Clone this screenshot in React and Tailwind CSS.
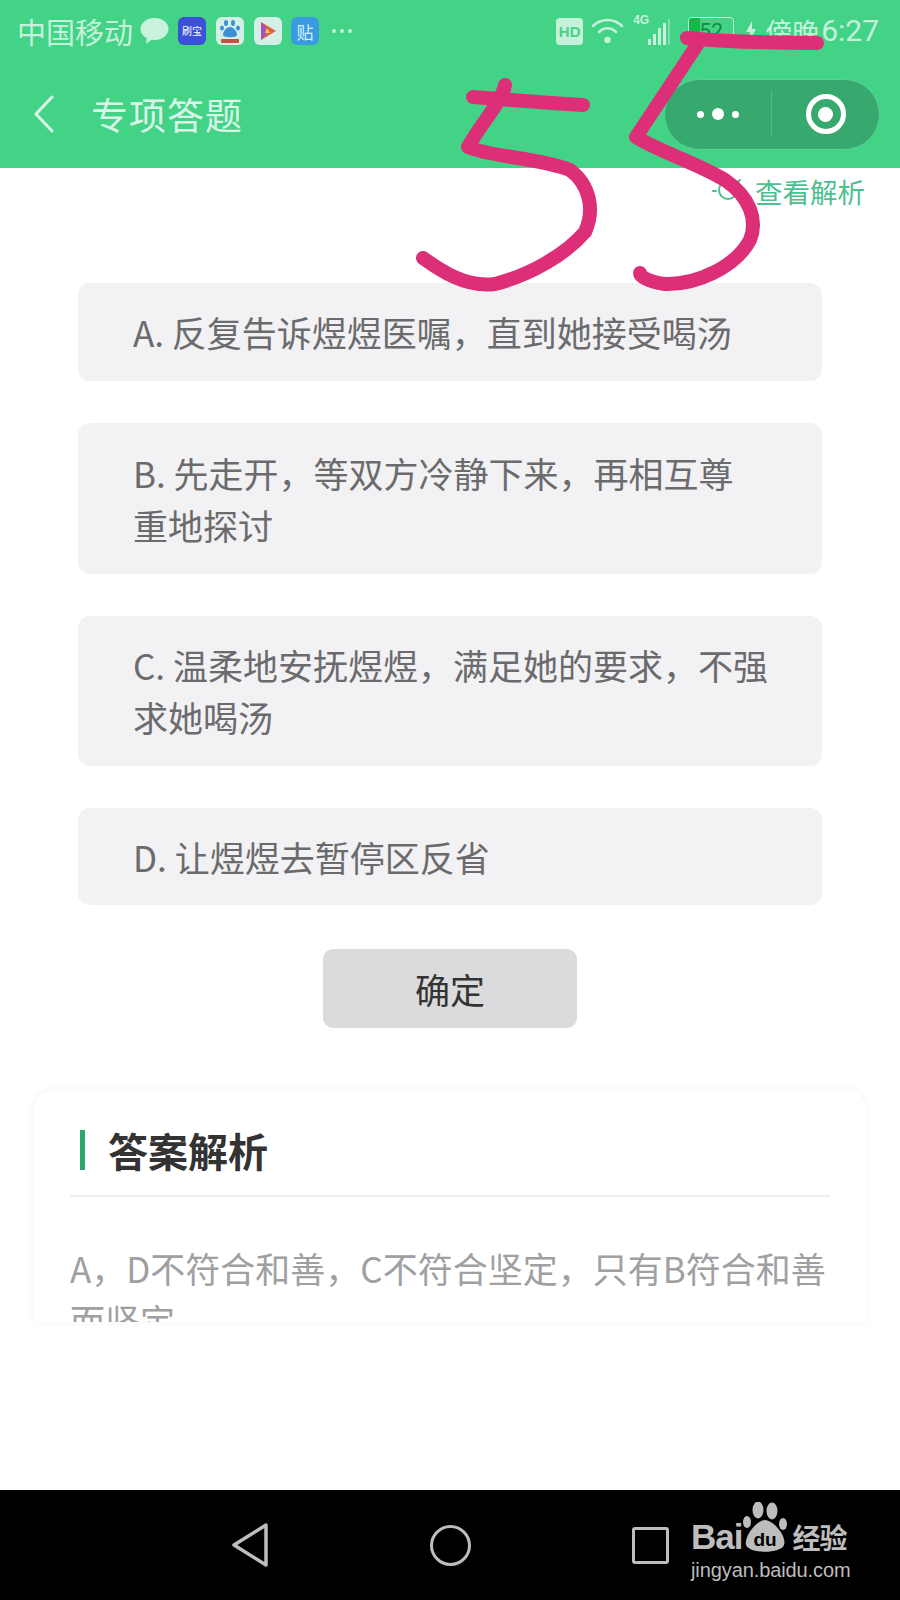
const FONT = "font-['Noto_Sans_CJK_SC','Noto_Sans',sans-serif]";

const options = [
  { text: 'A. 反复告诉煜煜医嘱，直到她接受喝汤', h: 'h-[98px]' },
  { text: 'B. 先走开，等双方冷静下来，再相互尊\n重地探讨', h: 'h-[151px]' },
  { text: 'C. 温柔地安抚煜煜，满足她的要求，不强\n求她喝汤', h: 'h-[150px]' },
  { text: 'D. 让煜煜去暂停区反省', h: 'h-[97px]' },
];

function StatusLeft() {
  return (
    <div className="flex items-center">
      <span className="text-[29px] leading-none text-[#c6f0da]">中国移动</span>
      <svg className="ml-[7px]" width="29" height="28" viewBox="0 0 29 28">
        <ellipse cx="14.5" cy="12" rx="14" ry="11" fill="#c9f2dd" />
        <path d="M7 19 L6 27 L14 21 Z" fill="#c9f2dd" />
      </svg>
      <div className="ml-[9px] flex h-[28px] w-[28px] items-center justify-center rounded-[6px] bg-[#3c50d8] text-[10px] leading-none text-white">刷宝</div>
      <div className="ml-[10px] flex h-[28px] w-[28px] flex-col items-center justify-center overflow-hidden rounded-[6px] bg-[#d3efe6]">
        <svg width="24" height="26" viewBox="0 0 24 26">
          <ellipse cx="8" cy="5" rx="2" ry="3" fill="#3e8fd6" />
          <ellipse cx="15" cy="5" rx="2" ry="3" fill="#3e8fd6" />
          <ellipse cx="4" cy="10" rx="2" ry="2.6" fill="#3e8fd6" />
          <ellipse cx="20" cy="10" rx="2" ry="2.6" fill="#3e8fd6" />
          <path d="M12 9 C8 9 5 14 5 17 C5 20 19 20 19 17 C19 14 16 9 12 9Z" fill="#3e8fd6" />
          <rect x="3" y="21" width="18" height="4" rx="1" fill="#b9573f" />
        </svg>
      </div>
      <div className="ml-[10px] flex h-[28px] w-[28px] items-center justify-center rounded-[6px] bg-[#d3efe6]">
        <svg width="20" height="20" viewBox="0 0 20 20">
          <path d="M3 1 L18 10 L3 19 Z" fill="#e2603d" />
          <path d="M3 1 L11 10 L3 19 Z" fill="#a64fbf" />
          <path d="M7 12 L12 12 L9 7 Z" fill="#f5d04a" />
        </svg>
      </div>
      <div className="ml-[9px] flex h-[28px] w-[28px] items-center justify-center rounded-[6px] bg-[#3a9be0] text-[17px] leading-none text-[#d9f0ff]">贴</div>
      <div className="ml-[13px] flex gap-[4px]">
        <span className="h-[4px] w-[4px] rounded-full bg-[#c6f0da]" />
        <span className="h-[4px] w-[4px] rounded-full bg-[#c6f0da]" />
        <span className="h-[4px] w-[4px] rounded-full bg-[#c6f0da]" />
      </div>
    </div>
  );
}

function StatusRight() {
  return (
    <div className="flex items-center">
      <div className="flex h-[27px] w-[27px] items-center justify-center rounded-[4px] bg-[#c6f0da] font-['Liberation_Sans',sans-serif] text-[15px] font-bold leading-none text-[#43d387]">HD</div>
      <svg className="ml-[8px]" width="33" height="28" viewBox="0 0 33 28" fill="none" stroke="#c6f0da" strokeWidth="2.5" strokeLinecap="round">
        <path d="M2 9 C10 1 23 1 31 9" />
        <path d="M8 15 C13 10 20 10 25 15" />
        <circle cx="16.5" cy="23" r="3.2" fill="#c6f0da" stroke="none" />
      </svg>
      <div className="relative ml-[9px] h-[28px] w-[40px]">
        <span className="absolute left-0 top-[-3px] font-['Liberation_Sans',sans-serif] text-[12px] font-bold leading-none text-[#c6f0da]">4G</span>
        <div className="absolute bottom-0 left-[15px] flex items-end gap-[2px]">
          <span className="h-[6px] w-[3px] bg-[#c6f0da]" />
          <span className="h-[11px] w-[3px] bg-[#c6f0da]" />
          <span className="h-[17px] w-[3px] bg-[#c6f0da]" />
          <span className="h-[22px] w-[3px] bg-[#c6f0da]" />
          <span className="h-[26px] w-[2px] bg-[#7fdcae]" />
        </div>
      </div>
      <div className="ml-[15px] flex h-[28px] w-[46px] items-center overflow-hidden rounded-[4px] border border-[#c6f0da]">
        <div className="relative h-full w-full">
          <div className="absolute inset-y-0 left-0 w-[11px] bg-[#12b84a]" />
          <span className="absolute inset-0 flex items-center justify-center font-['Roboto',sans-serif] text-[21px] leading-none text-[#0f8c43]">52</span>
        </div>
      </div>
      <svg className="ml-[12px]" width="10" height="20" viewBox="0 0 10 20">
        <path d="M6 0 L0 11 L4 11 L3 20 L10 8 L6 8 Z" fill="#c6f0da" />
      </svg>
      <span className="ml-[9px] text-[27px] leading-none text-[#c6f0da]">傍晚</span>
      <span className="ml-[2px] font-['Roboto',sans-serif] text-[30px] leading-none text-[#c6f0da]">6:27</span>
    </div>
  );
}

function Capsule() {
  return (
    <div className="flex h-[71px] w-[216px] items-center rounded-full border border-[#5ccf95] bg-[#37a96f]">
      <div className="flex flex-1 items-center justify-center gap-[8px]">
        <span className="h-[7px] w-[7px] rounded-full bg-white" />
        <span className="h-[12px] w-[12px] rounded-full bg-white" />
        <span className="h-[7px] w-[7px] rounded-full bg-white" />
      </div>
      <div className="h-[46px] w-px bg-[#5ab888]" />
      <div className="flex w-[107px] items-center justify-center">
        <div className="flex h-[40px] w-[40px] items-center justify-center rounded-full border-[5px] border-white">
          <span className="h-[15px] w-[15px] rounded-full bg-white" />
        </div>
      </div>
    </div>
  );
}

function Scribble() {
  return (
    <svg className="pointer-events-none absolute left-0 top-0" width="900" height="300" viewBox="0 0 900 300" fill="none" stroke="#dd2f78" strokeWidth="14" strokeLinecap="round" strokeLinejoin="round">
      <path d="M687 38 C730 42 780 43 817 43" />
      <path d="M697 45 L636 137 C660 152 695 162 725 180 C750 197 758 220 750 240 C735 268 695 285 665 284 C650 282 640 277 640 273" />
      <path d="M473 97 C510 100 550 103 583 105" />
      <path d="M505 85 C503 100 480 125 468 147 C490 157 540 158 570 170 C590 185 595 210 585 232 C565 255 530 275 495 284 C465 288 440 270 423 258" />
    </svg>
  );
}

function BaiduMark() {
  return (
    <div className="pointer-events-none absolute bottom-[19px] right-[48px] flex w-[161px] flex-col text-[#bdbdbd]">
      <div className="flex items-end">
        <span className="font-['Liberation_Sans',sans-serif] text-[35px] font-bold leading-[30px] tracking-[-1px]">Bai</span>
        <svg width="50" height="50" viewBox="0 0 50 50" className="ml-[-1px]">
          <ellipse cx="17" cy="8" rx="5.5" ry="8.5" fill="#bdbdbd" />
          <ellipse cx="31" cy="9" rx="5.5" ry="8.5" fill="#bdbdbd" />
          <ellipse cx="6" cy="20" rx="4" ry="6" fill="#bdbdbd" />
          <ellipse cx="42" cy="22" rx="4" ry="6" fill="#bdbdbd" />
          <path d="M24 18 C16 18 3 34 5 43 C8 52 40 52 43 43 C46 34 32 18 24 18Z" fill="#bdbdbd" />
          <text x="24" y="44" textAnchor="middle" fontSize="19" fontWeight="700" fontFamily="Liberation Sans" fill="#000000">du</text>
        </svg>
        <span className={`${FONT} ml-[1px] text-[28px] font-bold leading-[30px] tracking-[-1px]`}>经验</span>
      </div>
      <span className="mt-[7px] whitespace-nowrap font-['Liberation_Sans',sans-serif] text-[20px] leading-[22px] tracking-[-0.1px]">jingyan.baidu.com</span>
    </div>
  );
}

export default function App() {
  return (
    <div className={`${FONT} relative flex h-[1600px] w-[900px] flex-col overflow-hidden bg-white`}>
      <header className="flex h-[168px] shrink-0 flex-col bg-[#43d387]">
        <div className="flex h-[62px] items-center justify-between pl-[17px] pr-[21px]">
          <StatusLeft />
          <StatusRight />
        </div>
        <div className="flex flex-1 items-center justify-between pb-[2px] pl-[34px] pr-[20px]">
          <div className="flex items-center">
            <svg width="20" height="38" viewBox="0 0 20 38" fill="none" stroke="#d8f5e6" strokeWidth="3" strokeLinecap="round" strokeLinejoin="round">
              <path d="M18 2 L2 19 L18 36" />
            </svg>
            <h1 className="ml-[37px] text-[37px] font-normal leading-none tracking-[1px] text-[#d8f5e6]">专项答题</h1>
          </div>
          <Capsule />
        </div>
      </header>

      <main className="flex flex-1 flex-col">
        <div className="flex h-[115px] shrink-0 items-start justify-end pr-[35px] pt-[3px]">
          <div className="flex items-center gap-[11px]">
            <svg width="32" height="36" viewBox="0 0 32 36" fill="none" stroke="#4dc08f" strokeWidth="2" strokeLinecap="round">
              <circle cx="16" cy="17" r="9" />
              <path d="M16 2 V5 M4 7 L6 9 M28 7 L26 9 M1 18 H4 M28 18 H31" />
            </svg>
            <span className="text-[27.5px] leading-[40px] text-[#4dc08f]">查看解析</span>
          </div>
        </div>

        <div className="flex flex-col gap-[42px] px-[78px]">
          {options.map((o) => (
            <div key={o.text} className={`flex ${o.h} items-center whitespace-pre-line rounded-[12px] bg-[#f2f1f4] pl-[55px] pr-[40px] text-[35px] leading-[52px] text-[#6b6b6d]`}>
              {o.text}
            </div>
          ))}
        </div>

        <div className="mt-[44px] flex justify-center">
          <div className="flex h-[79px] w-[254px] items-center justify-center rounded-[10px] bg-[#dbdadc] text-[35px] leading-none text-[#333333]">确定</div>
        </div>

        <section className="mx-[34px] mt-[63px] h-[231px] overflow-hidden rounded-t-[18px] bg-white px-[36px] shadow-[0_-1px_8px_rgba(0,0,0,0.05)]">
          <div className="flex h-[106px] items-center border-b-2 border-[#eeeeef] pt-[14px]">
            <span className="ml-[10px] h-[40px] w-[5px] bg-[#2ba66d]" />
            <h2 className="ml-[23px] text-[40px] font-bold leading-none text-[#333333]">答案解析</h2>
          </div>
          <p className="mt-[45px] text-[35px] leading-[52px] text-[#a0a0a2]">A，D不符合和善，C不符合坚定，只有B符合和善而坚定</p>
        </section>
      </main>

      <footer className="flex h-[110px] shrink-0 items-center bg-black pl-[232px] pr-[231px]">
        <div className="flex w-full items-center justify-between">
          <svg width="36" height="44" viewBox="0 0 36 44" fill="none" stroke="#bdbdbd" strokeWidth="3.5" strokeLinejoin="round">
            <path d="M34 2 L2 22 L34 42 Z" />
          </svg>
          <span className="h-[41px] w-[41px] rounded-full border-[3.5px] border-[#bdbdbd]" />
          <span className="h-[37px] w-[37px] rounded-[3px] border-[3.5px] border-[#bdbdbd]" />
        </div>
      </footer>

      <Scribble />
      <BaiduMark />
    </div>
  );
}
